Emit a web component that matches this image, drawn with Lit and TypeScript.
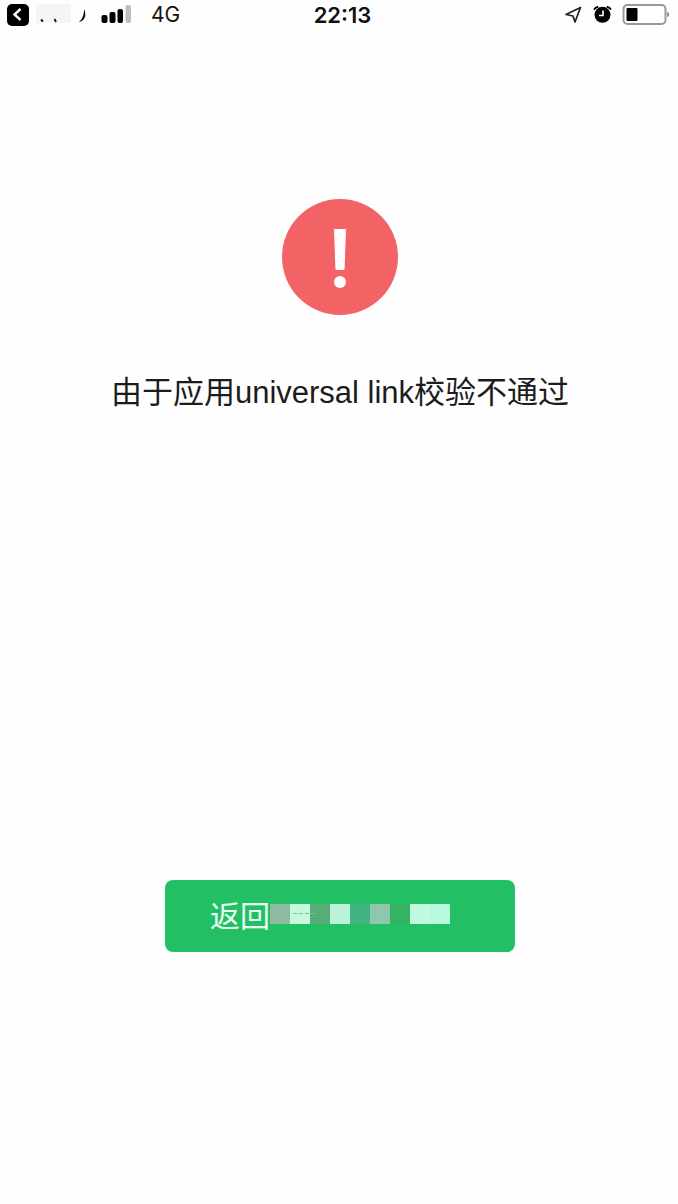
import { LitElement, html, css, svg } from "lit";
import { customElement } from "lit/decorators.js";

const MASK_COLORS = [
  "#8fb9a0", "#c6f8dc", "#55ad78", "#bbf2da", "#42b480",
  "#90c7ac", "#35b363", "#c0f9df", "#b8f8df",
];

@customElement("status-bar")
export class StatusBar extends LitElement {
  static styles = css`
    :host { display: block; }
    .bar {
      display: grid;
      grid-template-columns: 1fr auto 1fr;
      align-items: center;
      height: 30px;
      padding: 0 8px 0 7px;
      color: #111;
      font-size: 21px;
      line-height: 30px;
    }
    .left, .right { display: flex; align-items: center; }
    .right { justify-content: flex-end; gap: 10px; }
    .back { display: block; width: 22px; height: 22px; padding: 0; border: 0; background: none; }
    .carrier { margin-left: 7px; }
    .signal { margin: 0 20px 0 14px; }
    .time { padding-left: 8px; font-weight: 600; font-size: 22px; }
    svg { display: block; }
  `;

  render() {
    return html`
      <header class="bar">
        <div class="left">
          <button class="back" aria-label="返回上一个应用">
            <svg width="22" height="22" viewBox="0 0 22 22">
              <rect width="22" height="22" rx="5" fill="#000" />
              <path d="M13.500 5 7.500 10.500l6 5.500" fill="none" stroke="#fff" stroke-width="2.400" />
            </svg>
          </button>
          <svg class="carrier" width="51" height="22" viewBox="0 0 51 22" aria-hidden="true">
            <rect width="35" height="19" fill="#f5f5f5" />
            <path d="M5 15.500 7 17.500M18.500 15 20 18" stroke="#111" stroke-width="1.800" />
            <path d="M48 5c2.500 5 2 11.500-5 13 3-3 5-6 5-13z" fill="#111" />
          </svg>
          <svg class="signal" width="30" height="20" viewBox="0 0 30 20" aria-hidden="true">
            <rect x="0.500" y="10" width="6" height="8" rx="2" fill="#000" />
            <rect x="8.500" y="7" width="6" height="11" rx="2" fill="#000" />
            <rect x="16.500" y="4" width="5.500" height="14" rx="2" fill="#000" />
            <rect x="24.500" y="0" width="5.500" height="18" rx="2" fill="#bfbfbf" />
          </svg>
          <span>4G</span>
        </div>
        <div class="time">22:13</div>
        <div class="right">
          <svg width="19" height="18" viewBox="0 0 19 18" aria-hidden="true">
            <path d="M3 8.500 17.500 1.500 12 16 10 10z" fill="none" stroke="#222" stroke-width="1.700" stroke-linejoin="round" />
          </svg>
          <svg width="20" height="20" viewBox="0 0 20 20" aria-hidden="true">
            <circle cx="10.500" cy="9.800" r="8" fill="#000" />
            <path d="M2.500 4Q3.500 2.500 5.500 2M18.500 4Q17.500 2.500 15.500 2" fill="none" stroke="#000" stroke-width="2" stroke-linecap="round" />
            <path d="M11 5.500v5H7" fill="none" stroke="#fff" stroke-width="1.600" />
          </svg>
          <svg width="48" height="22" viewBox="0 0 48 22" aria-hidden="true">
            <rect x="1.500" y="1" width="42" height="19" rx="4" fill="#fff" stroke="#999" stroke-width="2" />
            <rect x="4.500" y="4" width="11" height="13" rx="1" fill="#000" />
            <path d="M45.500 8q3 2.500 0 5z" fill="#999" stroke="#999" />
          </svg>
        </div>
      </header>
    `;
  }
}

@customElement("app-root")
export class AppRoot extends LitElement {
  static styles = css`
    :host {
      display: block;
      min-height: 100vh;
      background: #fefefe;
      color: #1c1c1c;
      font-family: Inter, "Noto Sans CJK SC", sans-serif;
    }
    .content {
      display: flex;
      flex-direction: column;
      align-items: center;
      padding: 169px 22px 0 24px;
    }
    .alert { display: block; }
    .message {
      margin: 54px 0 0;
      font-family: "Liberation Sans", "Noto Sans CJK SC", sans-serif;
      font-size: 31px;
      line-height: 48px;
      font-weight: 400;
      text-align: center;
    }
    .return {
      display: flex;
      align-items: center;
      box-sizing: border-box;
      width: 350px;
      max-width: 100%;
      height: 72px;
      margin: 463px 0 0;
      padding: 0 45px;
      border: 0;
      border-radius: 8px;
      background: #23bf65;
      color: #eafff2;
      font-family: inherit;
      font-size: 30px;
      line-height: 44px;
    }
    .mask { display: block; margin-bottom: 4px; }
  `;

  render() {
    return html`
      <status-bar></status-bar>
      <main class="content">
        <svg class="alert" width="116" height="116" viewBox="0 0 116 116" aria-hidden="true">
          <circle cx="58" cy="58" r="58" fill="#f36365" />
          <path d="M52.500 30.500h11l-1.500 40h-8z" fill="#fff" stroke="#fff" stroke-linejoin="round" />
          <circle cx="58" cy="83" r="6" fill="#fff" />
        </svg>
        <h1 class="message">由于应用universal link校验不通过</h1>
        <button class="return">
          <span>返回</span>
          <svg class="mask" width="180" height="20" viewBox="0 0 180 20" shape-rendering="crispEdges" aria-hidden="true">
            ${MASK_COLORS.map((c, i) => svg`<rect x=${i * 20} width="20" height="20" fill=${c} />`)}
            <path d="M23 9h24" stroke="#6fc795" stroke-width="1" stroke-dasharray="4 2" />
          </svg>
        </button>
      </main>
    `;
  }
}
